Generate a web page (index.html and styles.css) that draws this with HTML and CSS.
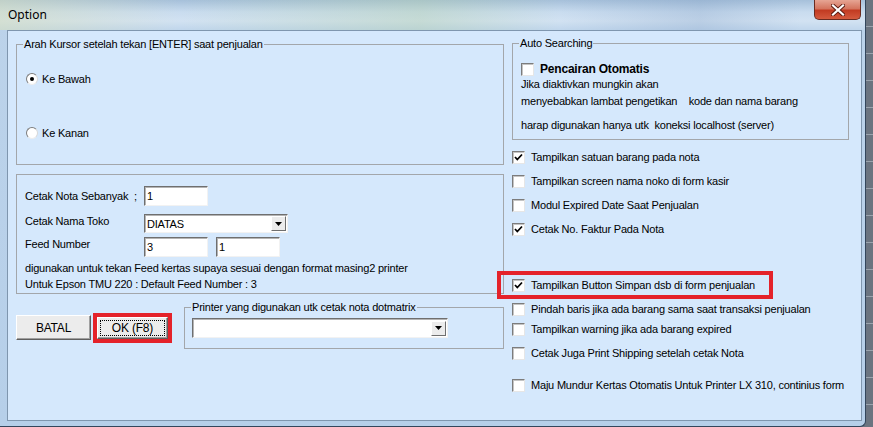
FILE: index.html
```html
<!DOCTYPE html>
<html lang="id">
<head>
    <meta charset="UTF-8">
    <title>Option</title>
    <link rel="stylesheet" href="styles.css">
</head>
<body>
    <div class="window">
        <div class="titlebar">
            <span class="title">Option</span>
            <button class="close" title="Close">
                <svg width="14" height="12" viewBox="0 0 14 12">
                    <path d="M2 1.5 L12 10.5 M12 1.5 L2 10.5" stroke="#5a1a10" stroke-width="4" stroke-linecap="square"/>
                    <path d="M2 1.5 L12 10.5 M12 1.5 L2 10.5" stroke="#fff" stroke-width="2.2" stroke-linecap="square"/>
                </svg>
            </button>
        </div>
        <div class="client">
            <div class="col-left">
                <fieldset class="group group-cursor">
                    <legend>Arah Kursor setelah tekan [ENTER] saat penjualan</legend>
                    <label class="radio-row first"><span class="radio checked"></span>Ke Bawah</label>
                    <label class="radio-row second"><span class="radio"></span>Ke Kanan</label>
                </fieldset>

                <div class="group group-print">
                    <div class="field-row">
                        <span class="field-label shifted">Cetak Nota Sebanyak &nbsp;;</span>
                        <input class="textbox" value="1">
                    </div>
                    <div class="field-row row-name">
                        <span class="field-label">Cetak Nama Toko</span>
                        <div class="combo combo-name">
                            <span class="combo-text">DIATAS</span>
                            <span class="drop"><svg width="7" height="4" viewBox="0 0 7 4"><path d="M0 0 H7 L3.5 4 Z" fill="#000"/></svg></span>
                        </div>
                    </div>
                    <div class="field-row row-feed">
                        <span class="field-label">Feed Number</span>
                        <input class="textbox" value="3">
                        <input class="textbox second-box" value="1">
                    </div>
                    <p class="note">digunakan untuk tekan Feed kertas supaya sesuai dengan format masing2 printer<br>Untuk Epson TMU 220 : Default Feed Number : 3</p>
                </div>

                <div class="actions">
                    <button class="btn btn-batal">BATAL</button>
                    <div class="ok-frame">
                        <button class="btn btn-ok"><span class="focus">OK (F8)</span></button>
                    </div>
                    <fieldset class="group group-printer">
                        <legend>Printer yang digunakan utk cetak nota dotmatrix</legend>
                        <div class="combo combo-printer">
                            <span class="combo-text"></span>
                            <span class="drop"><svg width="7" height="4" viewBox="0 0 7 4"><path d="M0 0 H7 L3.5 4 Z" fill="#000"/></svg></span>
                        </div>
                    </fieldset>
                </div>
            </div>

            <div class="col-right">
                <fieldset class="group group-auto">
                    <legend>Auto Searching</legend>
                    <label class="auto-option"><span class="checkbox"></span><b>Pencairan Otomatis</b></label>
                    <p class="auto-text">Jika diaktivkan mungkin akan<br>menyebabkan lambat pengetikan    kode dan nama barang</p>
                    <p class="auto-text last">harap digunakan hanya utk  koneksi localhost (server)</p>
                </fieldset>

                <label class="check-row"><span class="checkbox checked"><svg width="9" height="9" viewBox="0 0 9 9"><path d="M1 4 L3.3 6.5 L8 1.5" fill="none" stroke="#000" stroke-width="1.8"/></svg></span>Tampilkan satuan barang pada nota</label>
                <label class="check-row"><span class="checkbox"></span>Tampilkan screen nama noko di form kasir</label>
                <label class="check-row"><span class="checkbox"></span>Modul Expired Date Saat Penjualan</label>
                <label class="check-row"><span class="checkbox checked"><svg width="9" height="9" viewBox="0 0 9 9"><path d="M1 4 L3.3 6.5 L8 1.5" fill="none" stroke="#000" stroke-width="1.8"/></svg></span>Cetak No. Faktur Pada Nota</label>
                <div class="highlight-row">
                    <label class="check-row"><span class="checkbox checked"><svg width="9" height="9" viewBox="0 0 9 9"><path d="M1 4 L3.3 6.5 L8 1.5" fill="none" stroke="#000" stroke-width="1.8"/></svg></span>Tampilkan Button Simpan dsb di form penjualan</label>
                </div>
                <label class="check-row gap-3"><span class="checkbox"></span>Pindah baris jika ada barang sama saat transaksi penjualan</label>
                <label class="check-row gap-6"><span class="checkbox"></span>Tampilkan warning jika ada barang expired</label>
                <label class="check-row"><span class="checkbox"></span>Cetak Juga Print Shipping setelah cetak Nota</label>
                <label class="check-row gap-18"><span class="checkbox"></span>Maju Mundur Kertas Otomatis Untuk Printer LX 310, continius form</label>
            </div>
        </div>
    </div>
</body>
</html>
```

FILE: styles.css
```css
body {
    margin: 0;
    background-color: #6b7480;
    background-image: repeating-linear-gradient(180deg, #6b7480 0, #6b7480 26px, #9aa3ad 26px, #9aa3ad 27px);
    font-family: "Liberation Sans", Arial, sans-serif;
    font-size: 11px;
    letter-spacing: -0.2px;
    color: #000;
}

.window {
    width: 866px;
    height: 427px;
    box-sizing: border-box;
    padding-bottom: 5px;
    border-right: 1px solid #33465c;
    border-bottom: 1px solid #33465c;
    border-radius: 0 0 6px 0;
    background: linear-gradient(180deg, #bcd3ea 0, #b6cfe9 100%);
}

.titlebar {
    height: 30px;
    display: flex;
    align-items: flex-start;
    background:
        linear-gradient(90deg, rgba(214, 222, 186, 0.55) 0, rgba(190, 212, 232, 0) 180px, rgba(176, 206, 160, 0.35) 420px, rgba(190, 212, 232, 0) 560px, rgba(120, 150, 190, 0.25) 700px, rgba(190, 212, 232, 0) 800px),
        linear-gradient(180deg, #a6c0da 0, #c9dcef 40%, #d2e2f2 70%, #c0d6ec 100%);
}

.title {
    margin: 7px 0 0 8px;
    font-family: "Noto Sans", sans-serif;
    font-size: 12px;
    line-height: 15px;
    letter-spacing: normal;
    color: #000;
}

.close {
    margin: 0 4px 0 auto;
    width: 47px;
    height: 20px;
    padding: 0;
    border: 1px solid #6a2b20;
    border-top: none;
    border-radius: 0 0 5px 5px;
    background: linear-gradient(180deg, #e6a594 0, #d4755f 45%, #c23b22 55%, #d45a3e 100%);
    display: flex;
    justify-content: center;
    align-items: center;
}

.client {
    box-sizing: border-box;
    height: 391px;
    margin: 0 3px 0 7px;
    padding: 6px 0 0 8px;
    border: 1px solid #7f96ae;
    background-color: #d5e8fc;
    display: flex;
    gap: 8px;
}

.col-left {
    width: 488px;
}

.col-right {
    width: 337px;
    margin-top: -1px;
}

/* group boxes */
.group {
    margin: 0;
    padding: 0;
    min-width: 0;
    box-sizing: border-box;
    border: 1px solid #a3a6aa;
}

.group legend {
    margin-left: 6px;
    padding: 0 1px;
    line-height: 14px;
}

.group-cursor {
    height: 128px;
}

.radio-row {
    display: flex;
    align-items: center;
    height: 14px;
    margin-left: 9px;
}

.radio-row.first {
    margin-top: 21px;
}

.radio-row.second {
    margin-top: 40px;
}

.radio {
    width: 12px;
    height: 12px;
    box-sizing: border-box;
    margin-right: 4px;
    border-radius: 50%;
    border: 1px solid;
    border-color: #7c7c7c #d8d8d8 #ececec #7c7c7c;
    background: #fff;
    display: flex;
    justify-content: center;
    align-items: center;
}

.radio.checked::after {
    content: '';
    width: 4px;
    height: 4px;
    border-radius: 50%;
    background: #000;
}

.group-print {
    margin-top: 9px;
    height: 120px;
    padding: 11px 0 0 8px;
}

.field-row {
    display: flex;
    align-items: flex-start;
}

.field-label {
    width: 119px;
    line-height: 14px;
}

.field-label.shifted {
    margin-top: 3px;
}

.row-name {
    margin-top: 8px;
}

.row-feed {
    margin-top: 4px;
}

.textbox {
    width: 64px;
    height: 20px;
    box-sizing: border-box;
    margin: 0;
    padding: 0 0 0 2px;
    border: 1px solid;
    border-color: #6f6f6f #f2f2f2 #f2f2f2 #6f6f6f;
    box-shadow: inset 1px 1px 0 #b4b4b4;
    background: #fff;
    font: inherit;
    letter-spacing: inherit;
    color: #000;
    outline: none;
}

.second-box {
    margin-left: 8px;
}

.combo {
    box-sizing: border-box;
    height: 19px;
    display: flex;
    align-items: center;
    justify-content: space-between;
    border: 1px solid;
    border-color: #6f6f6f #f2f2f2 #f2f2f2 #6f6f6f;
    box-shadow: inset 1px 1px 0 #b4b4b4;
    background: #fff;
    padding: 0 1px 0 2px;
}

.combo-name {
    width: 144px;
}

.combo-printer {
    width: 256px;
    height: 20px;
    margin: 4px 0 0 7px;
}

.drop {
    width: 15px;
    height: 15px;
    box-sizing: border-box;
    border: 1px solid;
    border-color: #fff #6f6f6f #6f6f6f #fff;
    background: #ececec;
    display: flex;
    justify-content: center;
    align-items: center;
}

.note {
    margin: 3px 0 0;
    line-height: 16px;
}

/* buttons row */
.actions {
    display: flex;
    align-items: flex-start;
    margin-top: 6px;
}

.btn {
    box-sizing: border-box;
    padding: 0;
    border: 1px solid;
    border-color: #fff #5f5f5f #5f5f5f #fff;
    box-shadow: inset -1px -1px 0 #a0a0a0;
    background: #ececec;
    font: inherit;
    font-size: 12px;
    letter-spacing: inherit;
    color: #000;
}

.btn-batal {
    width: 75px;
    height: 25px;
    margin-top: 15px;
}

.ok-frame {
    box-sizing: border-box;
    width: 79px;
    height: 30px;
    margin: 13px 0 0 2px;
    border: 4px solid #e4222a;
}

.btn-ok {
    width: 71px;
    height: 22px;
    padding: 2px;
}

.focus {
    display: flex;
    justify-content: center;
    align-items: center;
    height: 100%;
    border: 1px dotted #000;
    box-sizing: border-box;
}

.group-printer {
    width: 320px;
    height: 49px;
    margin-left: 12px;
}

/* right column */
.group-auto {
    height: 104px;
}

.auto-option {
    display: flex;
    align-items: center;
    height: 14px;
    margin: 12px 0 0 8px;
}

.auto-option b {
    font-size: 12px;
}

.auto-text {
    margin: 0 0 0 8px;
    line-height: 17px;
    white-space: pre;
}

.auto-text.last {
    margin-top: 7px;
}

.checkbox {
    width: 13px;
    height: 13px;
    box-sizing: border-box;
    flex-shrink: 0;
    margin-right: 6px;
    border: 1px solid;
    border-color: #7c7c7c #e6e6e6 #e6e6e6 #7c7c7c;
    box-shadow: inset 1px 1px 0 #c4c4c4;
    background: #fff;
    display: flex;
    justify-content: center;
    align-items: center;
}

.check-row {
    display: flex;
    align-items: center;
    height: 14px;
    margin-top: 10px;
    white-space: nowrap;
}

.check-row.gap-3 {
    margin-top: 3px;
}

.check-row.gap-6 {
    margin-top: 6px;
}

.check-row.gap-18 {
    margin-top: 18px;
}

.highlight-row {
    box-sizing: border-box;
    width: 276px;
    height: 28px;
    margin: 35px 0 0 -15px;
    padding: 3px 0 0 11px;
    border: 4px solid #e4222a;
}

.highlight-row .check-row {
    margin-top: 0;
}
```
